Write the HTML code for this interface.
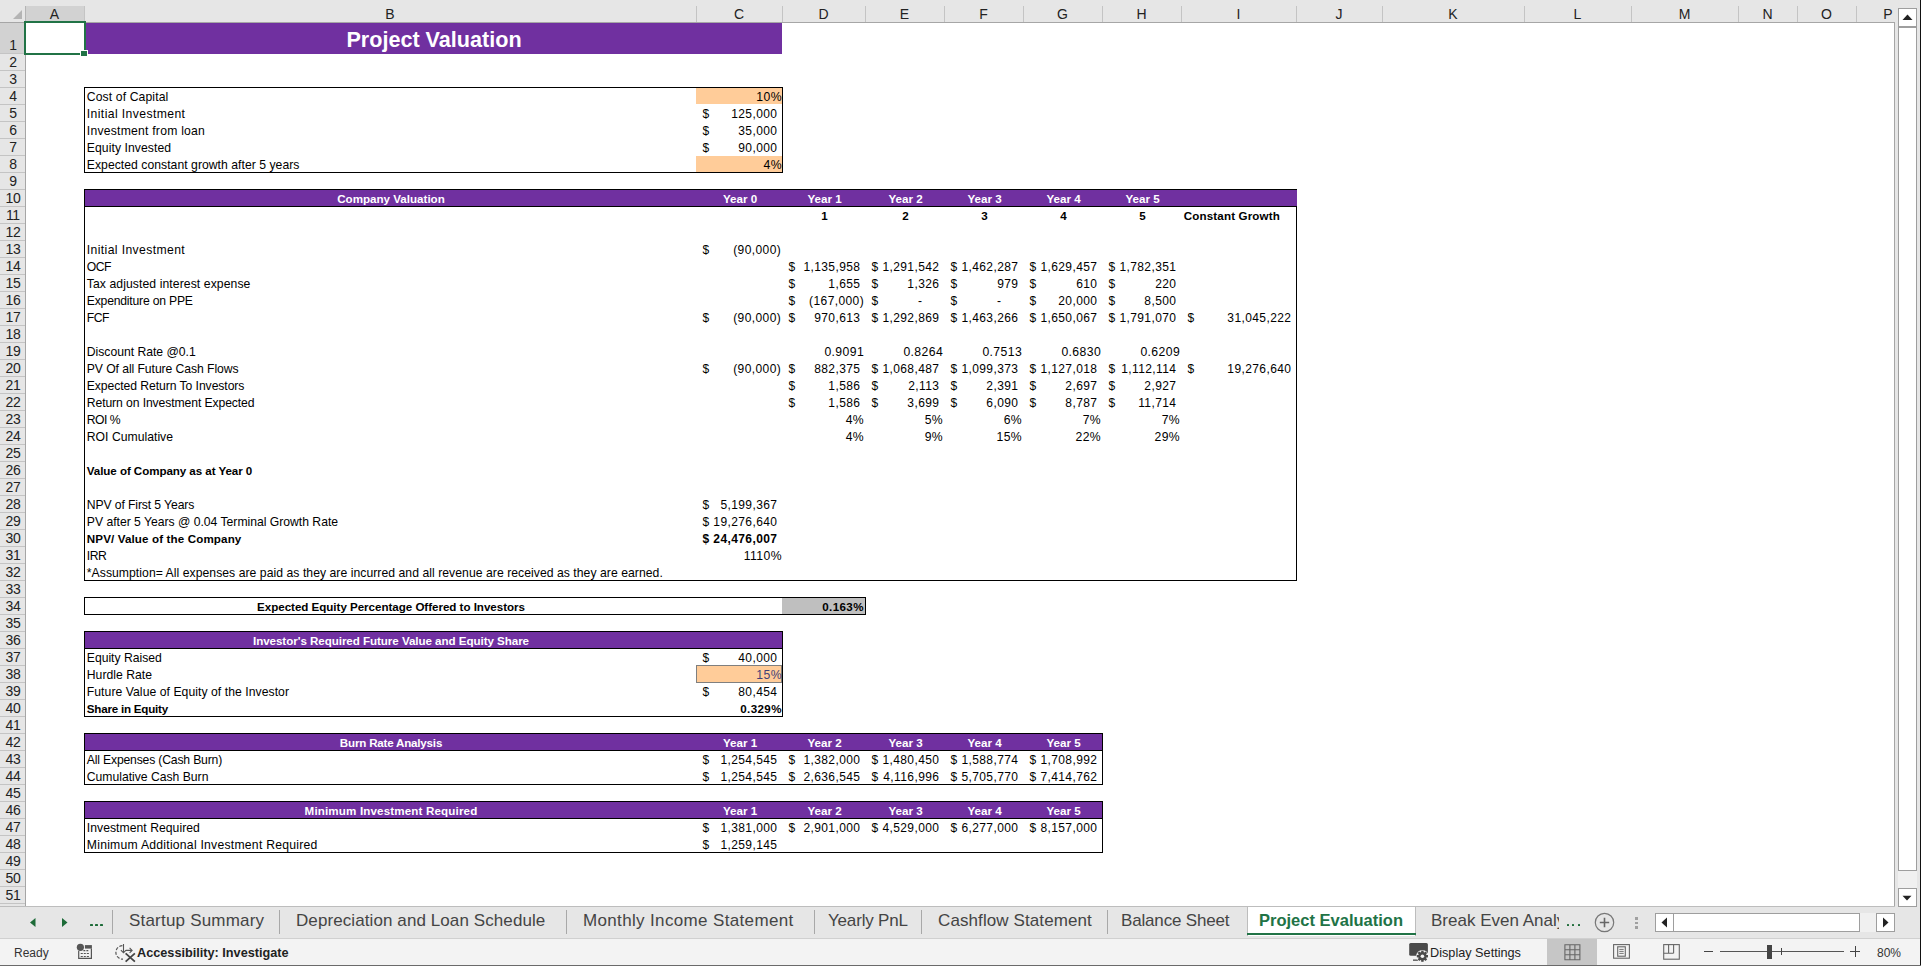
<!DOCTYPE html><html><head><meta charset="utf-8"><style>
html,body{margin:0;padding:0;width:1921px;height:966px;overflow:hidden;background:#fff;font-family:"Liberation Sans",sans-serif;}
.t{position:absolute;height:20px;line-height:20px;white-space:nowrap;overflow:visible;}
.hd{position:absolute;font-size:14px;color:#222;text-align:center;}
</style></head><body>

<div style="position:absolute;left:84px;top:23px;width:698px;height:31px;background:#7030a0"></div>
<div class="t" style="left:85px;width:698px;top:28px;height:24px;line-height:24px;text-align:center;font-size:21.6px;font-weight:700;color:#fff">Project Valuation</div>
<div style="position:absolute;left:696px;top:88px;width:86px;height:16px;background:#ffcc99"></div>
<div style="position:absolute;left:696px;top:156px;width:86px;height:16px;background:#ffcc99"></div>
<div style="position:absolute;left:84px;top:87px;width:699px;height:86px;border:1px solid #000;box-sizing:border-box"></div>
<div class="t" style="left:86.80px;width:800.00px;top:86.77px;text-align:left;font-size:12.2px;color:#000;letter-spacing:0.107px;">Cost of Capital</div>
<div class="t" style="left:-18.10px;width:800.00px;top:86.77px;text-align:right;font-size:12.2px;color:#000;letter-spacing:0.4px;">10%</div>
<div class="t" style="left:86.80px;width:800.00px;top:103.77px;text-align:left;font-size:12.2px;color:#000;letter-spacing:0.397px;">Initial Investment</div>
<div class="t" style="left:702.50px;width:20.00px;top:103.84px;text-align:left;font-size:12px;color:#000;">$</div>
<div class="t" style="left:-22.60px;width:800.00px;top:103.84px;text-align:right;font-size:12px;color:#000;letter-spacing:0.4px;">125,000</div>
<div class="t" style="left:86.80px;width:800.00px;top:120.77px;text-align:left;font-size:12.2px;color:#000;letter-spacing:0.224px;">Investment from loan</div>
<div class="t" style="left:702.50px;width:20.00px;top:120.84px;text-align:left;font-size:12px;color:#000;">$</div>
<div class="t" style="left:-22.60px;width:800.00px;top:120.84px;text-align:right;font-size:12px;color:#000;letter-spacing:0.4px;">35,000</div>
<div class="t" style="left:86.80px;width:800.00px;top:137.77px;text-align:left;font-size:12.2px;color:#000;letter-spacing:0.071px;">Equity Invested</div>
<div class="t" style="left:702.50px;width:20.00px;top:137.84px;text-align:left;font-size:12px;color:#000;">$</div>
<div class="t" style="left:-22.60px;width:800.00px;top:137.84px;text-align:right;font-size:12px;color:#000;letter-spacing:0.4px;">90,000</div>
<div class="t" style="left:86.80px;width:800.00px;top:154.77px;text-align:left;font-size:12.2px;color:#000;letter-spacing:0.034px;">Expected constant growth after 5 years</div>
<div class="t" style="left:-18.10px;width:800.00px;top:154.77px;text-align:right;font-size:12.2px;color:#000;letter-spacing:0.4px;">4%</div>
<div style="position:absolute;left:84px;top:190px;width:1212px;height:16px;background:#7030a0"></div>
<div style="position:absolute;left:84px;top:189px;width:1213px;height:392px;border:1px solid #000;box-sizing:border-box"></div>
<div style="position:absolute;left:84px;top:206px;width:1213px;height:1px;background:#000"></div>
<div style="position:absolute;left:1296px;top:190px;width:1px;height:16px;background:#7030a0"></div>
<div class="t" style="left:85.00px;width:612.00px;top:188.98px;text-align:center;font-size:11.6px;font-weight:700;color:#fff;">Company Valuation</div>
<div class="t" style="left:697.00px;width:86.00px;top:188.98px;text-align:center;font-size:11.6px;font-weight:700;color:#fff;">Year 0</div>
<div class="t" style="left:783.00px;width:83.00px;top:188.98px;text-align:center;font-size:11.6px;font-weight:700;color:#fff;">Year 1</div>
<div class="t" style="left:866.00px;width:79.00px;top:188.98px;text-align:center;font-size:11.6px;font-weight:700;color:#fff;">Year 2</div>
<div class="t" style="left:945.00px;width:79.00px;top:188.98px;text-align:center;font-size:11.6px;font-weight:700;color:#fff;">Year 3</div>
<div class="t" style="left:1024.00px;width:79.00px;top:188.98px;text-align:center;font-size:11.6px;font-weight:700;color:#fff;">Year 4</div>
<div class="t" style="left:1103.00px;width:79.00px;top:188.98px;text-align:center;font-size:11.6px;font-weight:700;color:#fff;">Year 5</div>
<div class="t" style="left:783.00px;width:83.00px;top:205.98px;text-align:center;font-size:11.6px;font-weight:700;color:#000;">1</div>
<div class="t" style="left:866.00px;width:79.00px;top:205.98px;text-align:center;font-size:11.6px;font-weight:700;color:#000;">2</div>
<div class="t" style="left:945.00px;width:79.00px;top:205.98px;text-align:center;font-size:11.6px;font-weight:700;color:#000;">3</div>
<div class="t" style="left:1024.00px;width:79.00px;top:205.98px;text-align:center;font-size:11.6px;font-weight:700;color:#000;">4</div>
<div class="t" style="left:1103.00px;width:79.00px;top:205.98px;text-align:center;font-size:11.6px;font-weight:700;color:#000;">5</div>
<div class="t" style="left:1183.80px;width:800.00px;top:205.98px;text-align:left;font-size:11.6px;font-weight:700;color:#000;letter-spacing:0.14px;">Constant Growth</div>
<div class="t" style="left:86.80px;width:800.00px;top:239.77px;text-align:left;font-size:12.2px;color:#000;letter-spacing:0.382px;">Initial Investment</div>
<div class="t" style="left:702.50px;width:20.00px;top:239.84px;text-align:left;font-size:12px;color:#000;">$</div>
<div class="t" style="left:-18.90px;width:800.00px;top:239.84px;text-align:right;font-size:12px;color:#000;letter-spacing:0.4px;">(90,000)</div>
<div class="t" style="left:86.80px;width:800.00px;top:256.77px;text-align:left;font-size:12.2px;color:#000;letter-spacing:-0.500px;">OCF</div>
<div class="t" style="left:788.50px;width:20.00px;top:256.84px;text-align:left;font-size:12px;color:#000;">$</div>
<div class="t" style="left:60.40px;width:800.00px;top:256.84px;text-align:right;font-size:12px;color:#000;letter-spacing:0.4px;">1,135,958</div>
<div class="t" style="left:871.50px;width:20.00px;top:256.84px;text-align:left;font-size:12px;color:#000;">$</div>
<div class="t" style="left:139.40px;width:800.00px;top:256.84px;text-align:right;font-size:12px;color:#000;letter-spacing:0.4px;">1,291,542</div>
<div class="t" style="left:950.50px;width:20.00px;top:256.84px;text-align:left;font-size:12px;color:#000;">$</div>
<div class="t" style="left:218.40px;width:800.00px;top:256.84px;text-align:right;font-size:12px;color:#000;letter-spacing:0.4px;">1,462,287</div>
<div class="t" style="left:1029.50px;width:20.00px;top:256.84px;text-align:left;font-size:12px;color:#000;">$</div>
<div class="t" style="left:297.40px;width:800.00px;top:256.84px;text-align:right;font-size:12px;color:#000;letter-spacing:0.4px;">1,629,457</div>
<div class="t" style="left:1108.50px;width:20.00px;top:256.84px;text-align:left;font-size:12px;color:#000;">$</div>
<div class="t" style="left:376.40px;width:800.00px;top:256.84px;text-align:right;font-size:12px;color:#000;letter-spacing:0.4px;">1,782,351</div>
<div class="t" style="left:86.80px;width:800.00px;top:273.77px;text-align:left;font-size:12.2px;color:#000;letter-spacing:0.082px;">Tax adjusted interest expense</div>
<div class="t" style="left:788.50px;width:20.00px;top:273.84px;text-align:left;font-size:12px;color:#000;">$</div>
<div class="t" style="left:60.40px;width:800.00px;top:273.84px;text-align:right;font-size:12px;color:#000;letter-spacing:0.4px;">1,655</div>
<div class="t" style="left:871.50px;width:20.00px;top:273.84px;text-align:left;font-size:12px;color:#000;">$</div>
<div class="t" style="left:139.40px;width:800.00px;top:273.84px;text-align:right;font-size:12px;color:#000;letter-spacing:0.4px;">1,326</div>
<div class="t" style="left:950.50px;width:20.00px;top:273.84px;text-align:left;font-size:12px;color:#000;">$</div>
<div class="t" style="left:218.40px;width:800.00px;top:273.84px;text-align:right;font-size:12px;color:#000;letter-spacing:0.4px;">979</div>
<div class="t" style="left:1029.50px;width:20.00px;top:273.84px;text-align:left;font-size:12px;color:#000;">$</div>
<div class="t" style="left:297.40px;width:800.00px;top:273.84px;text-align:right;font-size:12px;color:#000;letter-spacing:0.4px;">610</div>
<div class="t" style="left:1108.50px;width:20.00px;top:273.84px;text-align:left;font-size:12px;color:#000;">$</div>
<div class="t" style="left:376.40px;width:800.00px;top:273.84px;text-align:right;font-size:12px;color:#000;letter-spacing:0.4px;">220</div>
<div class="t" style="left:86.80px;width:800.00px;top:290.77px;text-align:left;font-size:12.2px;color:#000;letter-spacing:-0.212px;">Expenditure on PPE</div>
<div class="t" style="left:788.50px;width:20.00px;top:290.84px;text-align:left;font-size:12px;color:#000;">$</div>
<div class="t" style="left:64.10px;width:800.00px;top:290.84px;text-align:right;font-size:12px;color:#000;letter-spacing:0.4px;">(167,000)</div>
<div class="t" style="left:871.50px;width:20.00px;top:290.84px;text-align:left;font-size:12px;color:#000;">$</div>
<div class="t" style="left:122.00px;width:800.00px;top:290.84px;text-align:right;font-size:12px;color:#000;">-</div>
<div class="t" style="left:950.50px;width:20.00px;top:290.84px;text-align:left;font-size:12px;color:#000;">$</div>
<div class="t" style="left:201.00px;width:800.00px;top:290.84px;text-align:right;font-size:12px;color:#000;">-</div>
<div class="t" style="left:1029.50px;width:20.00px;top:290.84px;text-align:left;font-size:12px;color:#000;">$</div>
<div class="t" style="left:297.40px;width:800.00px;top:290.84px;text-align:right;font-size:12px;color:#000;letter-spacing:0.4px;">20,000</div>
<div class="t" style="left:1108.50px;width:20.00px;top:290.84px;text-align:left;font-size:12px;color:#000;">$</div>
<div class="t" style="left:376.40px;width:800.00px;top:290.84px;text-align:right;font-size:12px;color:#000;letter-spacing:0.4px;">8,500</div>
<div class="t" style="left:86.80px;width:800.00px;top:307.77px;text-align:left;font-size:12.2px;color:#000;letter-spacing:-0.500px;">FCF</div>
<div class="t" style="left:702.50px;width:20.00px;top:307.84px;text-align:left;font-size:12px;color:#000;">$</div>
<div class="t" style="left:-18.90px;width:800.00px;top:307.84px;text-align:right;font-size:12px;color:#000;letter-spacing:0.4px;">(90,000)</div>
<div class="t" style="left:788.50px;width:20.00px;top:307.84px;text-align:left;font-size:12px;color:#000;">$</div>
<div class="t" style="left:60.40px;width:800.00px;top:307.84px;text-align:right;font-size:12px;color:#000;letter-spacing:0.4px;">970,613</div>
<div class="t" style="left:871.50px;width:20.00px;top:307.84px;text-align:left;font-size:12px;color:#000;">$</div>
<div class="t" style="left:139.40px;width:800.00px;top:307.84px;text-align:right;font-size:12px;color:#000;letter-spacing:0.4px;">1,292,869</div>
<div class="t" style="left:950.50px;width:20.00px;top:307.84px;text-align:left;font-size:12px;color:#000;">$</div>
<div class="t" style="left:218.40px;width:800.00px;top:307.84px;text-align:right;font-size:12px;color:#000;letter-spacing:0.4px;">1,463,266</div>
<div class="t" style="left:1029.50px;width:20.00px;top:307.84px;text-align:left;font-size:12px;color:#000;">$</div>
<div class="t" style="left:297.40px;width:800.00px;top:307.84px;text-align:right;font-size:12px;color:#000;letter-spacing:0.4px;">1,650,067</div>
<div class="t" style="left:1108.50px;width:20.00px;top:307.84px;text-align:left;font-size:12px;color:#000;">$</div>
<div class="t" style="left:376.40px;width:800.00px;top:307.84px;text-align:right;font-size:12px;color:#000;letter-spacing:0.4px;">1,791,070</div>
<div class="t" style="left:1187.50px;width:20.00px;top:307.84px;text-align:left;font-size:12px;color:#000;">$</div>
<div class="t" style="left:491.40px;width:800.00px;top:307.84px;text-align:right;font-size:12px;color:#000;letter-spacing:0.4px;">31,045,222</div>
<div class="t" style="left:86.80px;width:800.00px;top:341.77px;text-align:left;font-size:12.2px;color:#000;letter-spacing:-0.018px;">Discount Rate @0.1</div>
<div class="t" style="left:64.10px;width:800.00px;top:341.77px;text-align:right;font-size:12.2px;color:#000;letter-spacing:0.4px;">0.9091</div>
<div class="t" style="left:143.10px;width:800.00px;top:341.77px;text-align:right;font-size:12.2px;color:#000;letter-spacing:0.4px;">0.8264</div>
<div class="t" style="left:222.10px;width:800.00px;top:341.77px;text-align:right;font-size:12.2px;color:#000;letter-spacing:0.4px;">0.7513</div>
<div class="t" style="left:301.10px;width:800.00px;top:341.77px;text-align:right;font-size:12.2px;color:#000;letter-spacing:0.4px;">0.6830</div>
<div class="t" style="left:380.10px;width:800.00px;top:341.77px;text-align:right;font-size:12.2px;color:#000;letter-spacing:0.4px;">0.6209</div>
<div class="t" style="left:86.80px;width:800.00px;top:358.77px;text-align:left;font-size:12.2px;color:#000;letter-spacing:-0.077px;">PV Of all Future Cash Flows</div>
<div class="t" style="left:702.50px;width:20.00px;top:358.84px;text-align:left;font-size:12px;color:#000;">$</div>
<div class="t" style="left:-18.90px;width:800.00px;top:358.84px;text-align:right;font-size:12px;color:#000;letter-spacing:0.4px;">(90,000)</div>
<div class="t" style="left:788.50px;width:20.00px;top:358.84px;text-align:left;font-size:12px;color:#000;">$</div>
<div class="t" style="left:60.40px;width:800.00px;top:358.84px;text-align:right;font-size:12px;color:#000;letter-spacing:0.4px;">882,375</div>
<div class="t" style="left:871.50px;width:20.00px;top:358.84px;text-align:left;font-size:12px;color:#000;">$</div>
<div class="t" style="left:139.40px;width:800.00px;top:358.84px;text-align:right;font-size:12px;color:#000;letter-spacing:0.4px;">1,068,487</div>
<div class="t" style="left:950.50px;width:20.00px;top:358.84px;text-align:left;font-size:12px;color:#000;">$</div>
<div class="t" style="left:218.40px;width:800.00px;top:358.84px;text-align:right;font-size:12px;color:#000;letter-spacing:0.4px;">1,099,373</div>
<div class="t" style="left:1029.50px;width:20.00px;top:358.84px;text-align:left;font-size:12px;color:#000;">$</div>
<div class="t" style="left:297.40px;width:800.00px;top:358.84px;text-align:right;font-size:12px;color:#000;letter-spacing:0.4px;">1,127,018</div>
<div class="t" style="left:1108.50px;width:20.00px;top:358.84px;text-align:left;font-size:12px;color:#000;">$</div>
<div class="t" style="left:376.40px;width:800.00px;top:358.84px;text-align:right;font-size:12px;color:#000;letter-spacing:0.4px;">1,112,114</div>
<div class="t" style="left:1187.50px;width:20.00px;top:358.84px;text-align:left;font-size:12px;color:#000;">$</div>
<div class="t" style="left:491.40px;width:800.00px;top:358.84px;text-align:right;font-size:12px;color:#000;letter-spacing:0.4px;">19,276,640</div>
<div class="t" style="left:86.80px;width:800.00px;top:375.77px;text-align:left;font-size:12.2px;color:#000;letter-spacing:-0.074px;">Expected Return To Investors</div>
<div class="t" style="left:788.50px;width:20.00px;top:375.84px;text-align:left;font-size:12px;color:#000;">$</div>
<div class="t" style="left:60.40px;width:800.00px;top:375.84px;text-align:right;font-size:12px;color:#000;letter-spacing:0.4px;">1,586</div>
<div class="t" style="left:871.50px;width:20.00px;top:375.84px;text-align:left;font-size:12px;color:#000;">$</div>
<div class="t" style="left:139.40px;width:800.00px;top:375.84px;text-align:right;font-size:12px;color:#000;letter-spacing:0.4px;">2,113</div>
<div class="t" style="left:950.50px;width:20.00px;top:375.84px;text-align:left;font-size:12px;color:#000;">$</div>
<div class="t" style="left:218.40px;width:800.00px;top:375.84px;text-align:right;font-size:12px;color:#000;letter-spacing:0.4px;">2,391</div>
<div class="t" style="left:1029.50px;width:20.00px;top:375.84px;text-align:left;font-size:12px;color:#000;">$</div>
<div class="t" style="left:297.40px;width:800.00px;top:375.84px;text-align:right;font-size:12px;color:#000;letter-spacing:0.4px;">2,697</div>
<div class="t" style="left:1108.50px;width:20.00px;top:375.84px;text-align:left;font-size:12px;color:#000;">$</div>
<div class="t" style="left:376.40px;width:800.00px;top:375.84px;text-align:right;font-size:12px;color:#000;letter-spacing:0.4px;">2,927</div>
<div class="t" style="left:86.80px;width:800.00px;top:392.77px;text-align:left;font-size:12.2px;color:#000;letter-spacing:-0.107px;">Return on Investment Expected</div>
<div class="t" style="left:788.50px;width:20.00px;top:392.84px;text-align:left;font-size:12px;color:#000;">$</div>
<div class="t" style="left:60.40px;width:800.00px;top:392.84px;text-align:right;font-size:12px;color:#000;letter-spacing:0.4px;">1,586</div>
<div class="t" style="left:871.50px;width:20.00px;top:392.84px;text-align:left;font-size:12px;color:#000;">$</div>
<div class="t" style="left:139.40px;width:800.00px;top:392.84px;text-align:right;font-size:12px;color:#000;letter-spacing:0.4px;">3,699</div>
<div class="t" style="left:950.50px;width:20.00px;top:392.84px;text-align:left;font-size:12px;color:#000;">$</div>
<div class="t" style="left:218.40px;width:800.00px;top:392.84px;text-align:right;font-size:12px;color:#000;letter-spacing:0.4px;">6,090</div>
<div class="t" style="left:1029.50px;width:20.00px;top:392.84px;text-align:left;font-size:12px;color:#000;">$</div>
<div class="t" style="left:297.40px;width:800.00px;top:392.84px;text-align:right;font-size:12px;color:#000;letter-spacing:0.4px;">8,787</div>
<div class="t" style="left:1108.50px;width:20.00px;top:392.84px;text-align:left;font-size:12px;color:#000;">$</div>
<div class="t" style="left:376.40px;width:800.00px;top:392.84px;text-align:right;font-size:12px;color:#000;letter-spacing:0.4px;">11,714</div>
<div class="t" style="left:86.80px;width:800.00px;top:409.77px;text-align:left;font-size:12.2px;color:#000;letter-spacing:-0.500px;">ROI %</div>
<div class="t" style="left:64.10px;width:800.00px;top:409.77px;text-align:right;font-size:12.2px;color:#000;letter-spacing:0.4px;">4%</div>
<div class="t" style="left:143.10px;width:800.00px;top:409.77px;text-align:right;font-size:12.2px;color:#000;letter-spacing:0.4px;">5%</div>
<div class="t" style="left:222.10px;width:800.00px;top:409.77px;text-align:right;font-size:12.2px;color:#000;letter-spacing:0.4px;">6%</div>
<div class="t" style="left:301.10px;width:800.00px;top:409.77px;text-align:right;font-size:12.2px;color:#000;letter-spacing:0.4px;">7%</div>
<div class="t" style="left:380.10px;width:800.00px;top:409.77px;text-align:right;font-size:12.2px;color:#000;letter-spacing:0.4px;">7%</div>
<div class="t" style="left:86.80px;width:800.00px;top:426.77px;text-align:left;font-size:12.2px;color:#000;letter-spacing:0.015px;">ROI Cumulative</div>
<div class="t" style="left:64.10px;width:800.00px;top:426.77px;text-align:right;font-size:12.2px;color:#000;letter-spacing:0.4px;">4%</div>
<div class="t" style="left:143.10px;width:800.00px;top:426.77px;text-align:right;font-size:12.2px;color:#000;letter-spacing:0.4px;">9%</div>
<div class="t" style="left:222.10px;width:800.00px;top:426.77px;text-align:right;font-size:12.2px;color:#000;letter-spacing:0.4px;">15%</div>
<div class="t" style="left:301.10px;width:800.00px;top:426.77px;text-align:right;font-size:12.2px;color:#000;letter-spacing:0.4px;">22%</div>
<div class="t" style="left:380.10px;width:800.00px;top:426.77px;text-align:right;font-size:12.2px;color:#000;letter-spacing:0.4px;">29%</div>
<div class="t" style="left:86.80px;width:800.00px;top:460.98px;text-align:left;font-size:11.6px;font-weight:700;color:#000;letter-spacing:-0.068px;">Value of Company as at Year 0</div>
<div class="t" style="left:86.80px;width:800.00px;top:494.77px;text-align:left;font-size:12.2px;color:#000;letter-spacing:-0.116px;">NPV of First 5 Years</div>
<div class="t" style="left:702.50px;width:20.00px;top:494.84px;text-align:left;font-size:12px;color:#000;">$</div>
<div class="t" style="left:-22.60px;width:800.00px;top:494.84px;text-align:right;font-size:12px;color:#000;letter-spacing:0.4px;">5,199,367</div>
<div class="t" style="left:86.80px;width:800.00px;top:511.77px;text-align:left;font-size:12.2px;color:#000;letter-spacing:-0.016px;">PV after 5 Years @ 0.04 Terminal Growth Rate</div>
<div class="t" style="left:702.50px;width:20.00px;top:511.84px;text-align:left;font-size:12px;color:#000;">$</div>
<div class="t" style="left:-22.60px;width:800.00px;top:511.84px;text-align:right;font-size:12px;color:#000;letter-spacing:0.4px;">19,276,640</div>
<div class="t" style="left:86.80px;width:800.00px;top:528.98px;text-align:left;font-size:11.6px;font-weight:700;color:#000;letter-spacing:0.129px;">NPV/ Value of the Company</div>
<div class="t" style="left:702.50px;width:20.00px;top:528.84px;text-align:left;font-size:12px;font-weight:700;color:#000;">$</div>
<div class="t" style="left:-22.60px;width:800.00px;top:528.84px;text-align:right;font-size:12px;font-weight:700;color:#000;letter-spacing:0.4px;">24,476,007</div>
<div class="t" style="left:86.80px;width:800.00px;top:545.77px;text-align:left;font-size:12.2px;color:#000;letter-spacing:-0.500px;">IRR</div>
<div class="t" style="left:-18.10px;width:800.00px;top:545.77px;text-align:right;font-size:12.2px;color:#000;letter-spacing:0.4px;">1110%</div>
<div class="t" style="left:86.80px;width:800.00px;top:562.77px;text-align:left;font-size:12.2px;color:#000;letter-spacing:0.044px;">*Assumption= All expenses are paid as they are incurred and all revenue are received as they are earned.</div>
<div style="position:absolute;left:782px;top:598px;width:83px;height:16px;background:#bfbfbf"></div>
<div style="position:absolute;left:84px;top:597px;width:782px;height:18px;border:1px solid #000;box-sizing:border-box"></div>
<div class="t" style="left:85.00px;width:612.00px;top:596.98px;text-align:center;font-size:11.6px;font-weight:700;color:#000;letter-spacing:-0.03px;">Expected Equity Percentage Offered to Investors</div>
<div class="t" style="left:63.90px;width:800.00px;top:596.98px;text-align:right;font-size:11.6px;font-weight:700;color:#000;letter-spacing:0.4px;">0.163%</div>
<div style="position:absolute;left:84px;top:632px;width:698px;height:16px;background:#7030a0"></div>
<div style="position:absolute;left:696px;top:666px;width:86px;height:16px;background:#ffcc99"></div>
<div style="position:absolute;left:696px;top:665px;width:86px;height:18px;border:1px solid #7f7f7f;box-sizing:border-box"></div>
<div style="position:absolute;left:84px;top:631px;width:699px;height:86px;border:1px solid #000;box-sizing:border-box"></div>
<div style="position:absolute;left:84px;top:648px;width:699px;height:1px;background:#000"></div>
<div class="t" style="left:85.00px;width:612.00px;top:630.98px;text-align:center;font-size:11.6px;font-weight:700;color:#fff;letter-spacing:-0.05px;">Investor's Required Future Value and Equity Share</div>
<div class="t" style="left:86.80px;width:800.00px;top:647.77px;text-align:left;font-size:12.2px;color:#000;letter-spacing:-0.017px;">Equity Raised</div>
<div class="t" style="left:702.50px;width:20.00px;top:647.84px;text-align:left;font-size:12px;color:#000;">$</div>
<div class="t" style="left:-22.60px;width:800.00px;top:647.84px;text-align:right;font-size:12px;color:#000;letter-spacing:0.4px;">40,000</div>
<div class="t" style="left:86.80px;width:800.00px;top:664.77px;text-align:left;font-size:12.2px;color:#000;letter-spacing:0.020px;">Hurdle Rate</div>
<div class="t" style="left:-18.10px;width:800.00px;top:664.77px;text-align:right;font-size:12.2px;color:#3f3f76;letter-spacing:0.4px;">15%</div>
<div class="t" style="left:86.80px;width:800.00px;top:681.77px;text-align:left;font-size:12.2px;color:#000;letter-spacing:0.051px;">Future Value of Equity of the Investor</div>
<div class="t" style="left:702.50px;width:20.00px;top:681.84px;text-align:left;font-size:12px;color:#000;">$</div>
<div class="t" style="left:-22.60px;width:800.00px;top:681.84px;text-align:right;font-size:12px;color:#000;letter-spacing:0.4px;">80,454</div>
<div class="t" style="left:86.80px;width:800.00px;top:698.98px;text-align:left;font-size:11.6px;font-weight:700;color:#000;letter-spacing:-0.214px;">Share in Equity</div>
<div class="t" style="left:-18.10px;width:800.00px;top:698.98px;text-align:right;font-size:11.6px;font-weight:700;color:#000;letter-spacing:0.4px;">0.329%</div>
<div style="position:absolute;left:84px;top:734px;width:1018px;height:16px;background:#7030a0"></div>
<div style="position:absolute;left:84px;top:733px;width:1019px;height:52px;border:1px solid #000;box-sizing:border-box"></div>
<div style="position:absolute;left:84px;top:750px;width:1019px;height:1px;background:#000"></div>
<div class="t" style="left:85.00px;width:612.00px;top:732.98px;text-align:center;font-size:11.6px;font-weight:700;color:#fff;letter-spacing:-0.2px;">Burn Rate Analysis</div>
<div class="t" style="left:697.00px;width:86.00px;top:732.98px;text-align:center;font-size:11.6px;font-weight:700;color:#fff;">Year 1</div>
<div class="t" style="left:783.00px;width:83.00px;top:732.98px;text-align:center;font-size:11.6px;font-weight:700;color:#fff;">Year 2</div>
<div class="t" style="left:866.00px;width:79.00px;top:732.98px;text-align:center;font-size:11.6px;font-weight:700;color:#fff;">Year 3</div>
<div class="t" style="left:945.00px;width:79.00px;top:732.98px;text-align:center;font-size:11.6px;font-weight:700;color:#fff;">Year 4</div>
<div class="t" style="left:1024.00px;width:79.00px;top:732.98px;text-align:center;font-size:11.6px;font-weight:700;color:#fff;">Year 5</div>
<div class="t" style="left:86.80px;width:800.00px;top:749.77px;text-align:left;font-size:12.2px;color:#000;letter-spacing:-0.178px;">All Expenses (Cash Burn)</div>
<div class="t" style="left:702.50px;width:20.00px;top:749.84px;text-align:left;font-size:12px;color:#000;">$</div>
<div class="t" style="left:-22.60px;width:800.00px;top:749.84px;text-align:right;font-size:12px;color:#000;letter-spacing:0.4px;">1,254,545</div>
<div class="t" style="left:788.50px;width:20.00px;top:749.84px;text-align:left;font-size:12px;color:#000;">$</div>
<div class="t" style="left:60.40px;width:800.00px;top:749.84px;text-align:right;font-size:12px;color:#000;letter-spacing:0.4px;">1,382,000</div>
<div class="t" style="left:871.50px;width:20.00px;top:749.84px;text-align:left;font-size:12px;color:#000;">$</div>
<div class="t" style="left:139.40px;width:800.00px;top:749.84px;text-align:right;font-size:12px;color:#000;letter-spacing:0.4px;">1,480,450</div>
<div class="t" style="left:950.50px;width:20.00px;top:749.84px;text-align:left;font-size:12px;color:#000;">$</div>
<div class="t" style="left:218.40px;width:800.00px;top:749.84px;text-align:right;font-size:12px;color:#000;letter-spacing:0.4px;">1,588,774</div>
<div class="t" style="left:1029.50px;width:20.00px;top:749.84px;text-align:left;font-size:12px;color:#000;">$</div>
<div class="t" style="left:297.40px;width:800.00px;top:749.84px;text-align:right;font-size:12px;color:#000;letter-spacing:0.4px;">1,708,992</div>
<div class="t" style="left:86.80px;width:800.00px;top:766.77px;text-align:left;font-size:12.2px;color:#000;letter-spacing:-0.016px;">Cumulative Cash Burn</div>
<div class="t" style="left:702.50px;width:20.00px;top:766.84px;text-align:left;font-size:12px;color:#000;">$</div>
<div class="t" style="left:-22.60px;width:800.00px;top:766.84px;text-align:right;font-size:12px;color:#000;letter-spacing:0.4px;">1,254,545</div>
<div class="t" style="left:788.50px;width:20.00px;top:766.84px;text-align:left;font-size:12px;color:#000;">$</div>
<div class="t" style="left:60.40px;width:800.00px;top:766.84px;text-align:right;font-size:12px;color:#000;letter-spacing:0.4px;">2,636,545</div>
<div class="t" style="left:871.50px;width:20.00px;top:766.84px;text-align:left;font-size:12px;color:#000;">$</div>
<div class="t" style="left:139.40px;width:800.00px;top:766.84px;text-align:right;font-size:12px;color:#000;letter-spacing:0.4px;">4,116,996</div>
<div class="t" style="left:950.50px;width:20.00px;top:766.84px;text-align:left;font-size:12px;color:#000;">$</div>
<div class="t" style="left:218.40px;width:800.00px;top:766.84px;text-align:right;font-size:12px;color:#000;letter-spacing:0.4px;">5,705,770</div>
<div class="t" style="left:1029.50px;width:20.00px;top:766.84px;text-align:left;font-size:12px;color:#000;">$</div>
<div class="t" style="left:297.40px;width:800.00px;top:766.84px;text-align:right;font-size:12px;color:#000;letter-spacing:0.4px;">7,414,762</div>
<div style="position:absolute;left:84px;top:802px;width:1018px;height:16px;background:#7030a0"></div>
<div style="position:absolute;left:84px;top:801px;width:1019px;height:52px;border:1px solid #000;box-sizing:border-box"></div>
<div style="position:absolute;left:84px;top:818px;width:1019px;height:1px;background:#000"></div>
<div class="t" style="left:85.00px;width:612.00px;top:800.98px;text-align:center;font-size:11.6px;font-weight:700;color:#fff;letter-spacing:0.15px;">Minimum Investment Required</div>
<div class="t" style="left:697.00px;width:86.00px;top:800.98px;text-align:center;font-size:11.6px;font-weight:700;color:#fff;">Year 1</div>
<div class="t" style="left:783.00px;width:83.00px;top:800.98px;text-align:center;font-size:11.6px;font-weight:700;color:#fff;">Year 2</div>
<div class="t" style="left:866.00px;width:79.00px;top:800.98px;text-align:center;font-size:11.6px;font-weight:700;color:#fff;">Year 3</div>
<div class="t" style="left:945.00px;width:79.00px;top:800.98px;text-align:center;font-size:11.6px;font-weight:700;color:#fff;">Year 4</div>
<div class="t" style="left:1024.00px;width:79.00px;top:800.98px;text-align:center;font-size:11.6px;font-weight:700;color:#fff;">Year 5</div>
<div class="t" style="left:86.80px;width:800.00px;top:817.77px;text-align:left;font-size:12.2px;color:#000;letter-spacing:0.033px;">Investment Required</div>
<div class="t" style="left:702.50px;width:20.00px;top:817.84px;text-align:left;font-size:12px;color:#000;">$</div>
<div class="t" style="left:-22.60px;width:800.00px;top:817.84px;text-align:right;font-size:12px;color:#000;letter-spacing:0.4px;">1,381,000</div>
<div class="t" style="left:788.50px;width:20.00px;top:817.84px;text-align:left;font-size:12px;color:#000;">$</div>
<div class="t" style="left:60.40px;width:800.00px;top:817.84px;text-align:right;font-size:12px;color:#000;letter-spacing:0.4px;">2,901,000</div>
<div class="t" style="left:871.50px;width:20.00px;top:817.84px;text-align:left;font-size:12px;color:#000;">$</div>
<div class="t" style="left:139.40px;width:800.00px;top:817.84px;text-align:right;font-size:12px;color:#000;letter-spacing:0.4px;">4,529,000</div>
<div class="t" style="left:950.50px;width:20.00px;top:817.84px;text-align:left;font-size:12px;color:#000;">$</div>
<div class="t" style="left:218.40px;width:800.00px;top:817.84px;text-align:right;font-size:12px;color:#000;letter-spacing:0.4px;">6,277,000</div>
<div class="t" style="left:1029.50px;width:20.00px;top:817.84px;text-align:left;font-size:12px;color:#000;">$</div>
<div class="t" style="left:297.40px;width:800.00px;top:817.84px;text-align:right;font-size:12px;color:#000;letter-spacing:0.4px;">8,157,000</div>
<div class="t" style="left:86.80px;width:800.00px;top:834.77px;text-align:left;font-size:12.2px;color:#000;letter-spacing:0.243px;">Minimum Additional Investment Required</div>
<div class="t" style="left:702.50px;width:20.00px;top:834.84px;text-align:left;font-size:12px;color:#000;">$</div>
<div class="t" style="left:-22.60px;width:800.00px;top:834.84px;text-align:right;font-size:12px;color:#000;letter-spacing:0.4px;">1,259,145</div>
<div style="position:absolute;left:0px;top:0px;width:1921px;height:22px;background:#e6e6e6"></div>
<div style="position:absolute;left:26px;top:6px;width:58px;height:16px;background:#d2d2d2"></div>
<div style="position:absolute;left:25px;top:6px;width:1px;height:16px;background:#b4b4b4"></div>
<div style="position:absolute;left:0px;top:22px;width:1895px;height:1px;background:#a6a6a6"></div>
<div style="position:absolute;left:84px;top:6px;width:1px;height:16px;background:#c4c4c4"></div>
<div style="position:absolute;left:696px;top:6px;width:1px;height:16px;background:#c4c4c4"></div>
<div style="position:absolute;left:782px;top:6px;width:1px;height:16px;background:#c4c4c4"></div>
<div style="position:absolute;left:865px;top:6px;width:1px;height:16px;background:#c4c4c4"></div>
<div style="position:absolute;left:944px;top:6px;width:1px;height:16px;background:#c4c4c4"></div>
<div style="position:absolute;left:1023px;top:6px;width:1px;height:16px;background:#c4c4c4"></div>
<div style="position:absolute;left:1102px;top:6px;width:1px;height:16px;background:#c4c4c4"></div>
<div style="position:absolute;left:1181px;top:6px;width:1px;height:16px;background:#c4c4c4"></div>
<div style="position:absolute;left:1296px;top:6px;width:1px;height:16px;background:#c4c4c4"></div>
<div style="position:absolute;left:1382px;top:6px;width:1px;height:16px;background:#c4c4c4"></div>
<div style="position:absolute;left:1524px;top:6px;width:1px;height:16px;background:#c4c4c4"></div>
<div style="position:absolute;left:1631px;top:6px;width:1px;height:16px;background:#c4c4c4"></div>
<div style="position:absolute;left:1738px;top:6px;width:1px;height:16px;background:#c4c4c4"></div>
<div style="position:absolute;left:1797px;top:6px;width:1px;height:16px;background:#c4c4c4"></div>
<div style="position:absolute;left:1856px;top:6px;width:1px;height:16px;background:#c4c4c4"></div>
<svg style="position:absolute;left:12px;top:9px" width="12" height="12"><polygon points="10,1 10,10 1,10" fill="#b4b4b4"/></svg>
<div class="hd" style="left:25px;width:59px;top:3.5px;height:20px;line-height:20px">A</div>
<div class="hd" style="left:84px;width:612px;top:3.5px;height:20px;line-height:20px">B</div>
<div class="hd" style="left:696px;width:86px;top:3.5px;height:20px;line-height:20px">C</div>
<div class="hd" style="left:782px;width:83px;top:3.5px;height:20px;line-height:20px">D</div>
<div class="hd" style="left:865px;width:79px;top:3.5px;height:20px;line-height:20px">E</div>
<div class="hd" style="left:944px;width:79px;top:3.5px;height:20px;line-height:20px">F</div>
<div class="hd" style="left:1023px;width:79px;top:3.5px;height:20px;line-height:20px">G</div>
<div class="hd" style="left:1102px;width:79px;top:3.5px;height:20px;line-height:20px">H</div>
<div class="hd" style="left:1181px;width:115px;top:3.5px;height:20px;line-height:20px">I</div>
<div class="hd" style="left:1296px;width:86px;top:3.5px;height:20px;line-height:20px">J</div>
<div class="hd" style="left:1382px;width:142px;top:3.5px;height:20px;line-height:20px">K</div>
<div class="hd" style="left:1524px;width:107px;top:3.5px;height:20px;line-height:20px">L</div>
<div class="hd" style="left:1631px;width:107px;top:3.5px;height:20px;line-height:20px">M</div>
<div class="hd" style="left:1738px;width:59px;top:3.5px;height:20px;line-height:20px">N</div>
<div class="hd" style="left:1797px;width:59px;top:3.5px;height:20px;line-height:20px">O</div>
<div class="hd" style="left:1859px;width:58px;top:3.5px;height:20px;line-height:20px">P</div>
<div style="position:absolute;left:0px;top:23px;width:25px;height:883px;background:#e6e6e6"></div>
<div style="position:absolute;left:0px;top:23px;width:25px;height:30px;background:#d2d2d2"></div>
<div style="position:absolute;left:25px;top:22px;width:1px;height:884px;background:#a6a6a6"></div>
<div style="position:absolute;left:0px;top:53px;width:25px;height:1px;background:#c4c4c4"></div>
<div class="hd" style="left:0.4px;width:25px;top:35.2px;height:20px;line-height:20px;font-size:14px;letter-spacing:-0.5px">1</div>
<div style="position:absolute;left:0px;top:70px;width:25px;height:1px;background:#c4c4c4"></div>
<div class="hd" style="left:0.4px;width:25px;top:52.2px;height:20px;line-height:20px;font-size:14px;letter-spacing:-0.5px">2</div>
<div style="position:absolute;left:0px;top:87px;width:25px;height:1px;background:#c4c4c4"></div>
<div class="hd" style="left:0.4px;width:25px;top:69.2px;height:20px;line-height:20px;font-size:14px;letter-spacing:-0.5px">3</div>
<div style="position:absolute;left:0px;top:104px;width:25px;height:1px;background:#c4c4c4"></div>
<div class="hd" style="left:0.4px;width:25px;top:86.2px;height:20px;line-height:20px;font-size:14px;letter-spacing:-0.5px">4</div>
<div style="position:absolute;left:0px;top:121px;width:25px;height:1px;background:#c4c4c4"></div>
<div class="hd" style="left:0.4px;width:25px;top:103.2px;height:20px;line-height:20px;font-size:14px;letter-spacing:-0.5px">5</div>
<div style="position:absolute;left:0px;top:138px;width:25px;height:1px;background:#c4c4c4"></div>
<div class="hd" style="left:0.4px;width:25px;top:120.2px;height:20px;line-height:20px;font-size:14px;letter-spacing:-0.5px">6</div>
<div style="position:absolute;left:0px;top:155px;width:25px;height:1px;background:#c4c4c4"></div>
<div class="hd" style="left:0.4px;width:25px;top:137.2px;height:20px;line-height:20px;font-size:14px;letter-spacing:-0.5px">7</div>
<div style="position:absolute;left:0px;top:172px;width:25px;height:1px;background:#c4c4c4"></div>
<div class="hd" style="left:0.4px;width:25px;top:154.2px;height:20px;line-height:20px;font-size:14px;letter-spacing:-0.5px">8</div>
<div style="position:absolute;left:0px;top:189px;width:25px;height:1px;background:#c4c4c4"></div>
<div class="hd" style="left:0.4px;width:25px;top:171.2px;height:20px;line-height:20px;font-size:14px;letter-spacing:-0.5px">9</div>
<div style="position:absolute;left:0px;top:206px;width:25px;height:1px;background:#c4c4c4"></div>
<div class="hd" style="left:0.4px;width:25px;top:188.2px;height:20px;line-height:20px;font-size:14px;letter-spacing:-0.5px">10</div>
<div style="position:absolute;left:0px;top:223px;width:25px;height:1px;background:#c4c4c4"></div>
<div class="hd" style="left:0.4px;width:25px;top:205.2px;height:20px;line-height:20px;font-size:14px;letter-spacing:-0.5px">11</div>
<div style="position:absolute;left:0px;top:240px;width:25px;height:1px;background:#c4c4c4"></div>
<div class="hd" style="left:0.4px;width:25px;top:222.2px;height:20px;line-height:20px;font-size:14px;letter-spacing:-0.5px">12</div>
<div style="position:absolute;left:0px;top:257px;width:25px;height:1px;background:#c4c4c4"></div>
<div class="hd" style="left:0.4px;width:25px;top:239.2px;height:20px;line-height:20px;font-size:14px;letter-spacing:-0.5px">13</div>
<div style="position:absolute;left:0px;top:274px;width:25px;height:1px;background:#c4c4c4"></div>
<div class="hd" style="left:0.4px;width:25px;top:256.2px;height:20px;line-height:20px;font-size:14px;letter-spacing:-0.5px">14</div>
<div style="position:absolute;left:0px;top:291px;width:25px;height:1px;background:#c4c4c4"></div>
<div class="hd" style="left:0.4px;width:25px;top:273.2px;height:20px;line-height:20px;font-size:14px;letter-spacing:-0.5px">15</div>
<div style="position:absolute;left:0px;top:308px;width:25px;height:1px;background:#c4c4c4"></div>
<div class="hd" style="left:0.4px;width:25px;top:290.2px;height:20px;line-height:20px;font-size:14px;letter-spacing:-0.5px">16</div>
<div style="position:absolute;left:0px;top:325px;width:25px;height:1px;background:#c4c4c4"></div>
<div class="hd" style="left:0.4px;width:25px;top:307.2px;height:20px;line-height:20px;font-size:14px;letter-spacing:-0.5px">17</div>
<div style="position:absolute;left:0px;top:342px;width:25px;height:1px;background:#c4c4c4"></div>
<div class="hd" style="left:0.4px;width:25px;top:324.2px;height:20px;line-height:20px;font-size:14px;letter-spacing:-0.5px">18</div>
<div style="position:absolute;left:0px;top:359px;width:25px;height:1px;background:#c4c4c4"></div>
<div class="hd" style="left:0.4px;width:25px;top:341.2px;height:20px;line-height:20px;font-size:14px;letter-spacing:-0.5px">19</div>
<div style="position:absolute;left:0px;top:376px;width:25px;height:1px;background:#c4c4c4"></div>
<div class="hd" style="left:0.4px;width:25px;top:358.2px;height:20px;line-height:20px;font-size:14px;letter-spacing:-0.5px">20</div>
<div style="position:absolute;left:0px;top:393px;width:25px;height:1px;background:#c4c4c4"></div>
<div class="hd" style="left:0.4px;width:25px;top:375.2px;height:20px;line-height:20px;font-size:14px;letter-spacing:-0.5px">21</div>
<div style="position:absolute;left:0px;top:410px;width:25px;height:1px;background:#c4c4c4"></div>
<div class="hd" style="left:0.4px;width:25px;top:392.2px;height:20px;line-height:20px;font-size:14px;letter-spacing:-0.5px">22</div>
<div style="position:absolute;left:0px;top:427px;width:25px;height:1px;background:#c4c4c4"></div>
<div class="hd" style="left:0.4px;width:25px;top:409.2px;height:20px;line-height:20px;font-size:14px;letter-spacing:-0.5px">23</div>
<div style="position:absolute;left:0px;top:444px;width:25px;height:1px;background:#c4c4c4"></div>
<div class="hd" style="left:0.4px;width:25px;top:426.2px;height:20px;line-height:20px;font-size:14px;letter-spacing:-0.5px">24</div>
<div style="position:absolute;left:0px;top:461px;width:25px;height:1px;background:#c4c4c4"></div>
<div class="hd" style="left:0.4px;width:25px;top:443.2px;height:20px;line-height:20px;font-size:14px;letter-spacing:-0.5px">25</div>
<div style="position:absolute;left:0px;top:478px;width:25px;height:1px;background:#c4c4c4"></div>
<div class="hd" style="left:0.4px;width:25px;top:460.2px;height:20px;line-height:20px;font-size:14px;letter-spacing:-0.5px">26</div>
<div style="position:absolute;left:0px;top:495px;width:25px;height:1px;background:#c4c4c4"></div>
<div class="hd" style="left:0.4px;width:25px;top:477.2px;height:20px;line-height:20px;font-size:14px;letter-spacing:-0.5px">27</div>
<div style="position:absolute;left:0px;top:512px;width:25px;height:1px;background:#c4c4c4"></div>
<div class="hd" style="left:0.4px;width:25px;top:494.2px;height:20px;line-height:20px;font-size:14px;letter-spacing:-0.5px">28</div>
<div style="position:absolute;left:0px;top:529px;width:25px;height:1px;background:#c4c4c4"></div>
<div class="hd" style="left:0.4px;width:25px;top:511.2px;height:20px;line-height:20px;font-size:14px;letter-spacing:-0.5px">29</div>
<div style="position:absolute;left:0px;top:546px;width:25px;height:1px;background:#c4c4c4"></div>
<div class="hd" style="left:0.4px;width:25px;top:528.2px;height:20px;line-height:20px;font-size:14px;letter-spacing:-0.5px">30</div>
<div style="position:absolute;left:0px;top:563px;width:25px;height:1px;background:#c4c4c4"></div>
<div class="hd" style="left:0.4px;width:25px;top:545.2px;height:20px;line-height:20px;font-size:14px;letter-spacing:-0.5px">31</div>
<div style="position:absolute;left:0px;top:580px;width:25px;height:1px;background:#c4c4c4"></div>
<div class="hd" style="left:0.4px;width:25px;top:562.2px;height:20px;line-height:20px;font-size:14px;letter-spacing:-0.5px">32</div>
<div style="position:absolute;left:0px;top:597px;width:25px;height:1px;background:#c4c4c4"></div>
<div class="hd" style="left:0.4px;width:25px;top:579.2px;height:20px;line-height:20px;font-size:14px;letter-spacing:-0.5px">33</div>
<div style="position:absolute;left:0px;top:614px;width:25px;height:1px;background:#c4c4c4"></div>
<div class="hd" style="left:0.4px;width:25px;top:596.2px;height:20px;line-height:20px;font-size:14px;letter-spacing:-0.5px">34</div>
<div style="position:absolute;left:0px;top:631px;width:25px;height:1px;background:#c4c4c4"></div>
<div class="hd" style="left:0.4px;width:25px;top:613.2px;height:20px;line-height:20px;font-size:14px;letter-spacing:-0.5px">35</div>
<div style="position:absolute;left:0px;top:648px;width:25px;height:1px;background:#c4c4c4"></div>
<div class="hd" style="left:0.4px;width:25px;top:630.2px;height:20px;line-height:20px;font-size:14px;letter-spacing:-0.5px">36</div>
<div style="position:absolute;left:0px;top:665px;width:25px;height:1px;background:#c4c4c4"></div>
<div class="hd" style="left:0.4px;width:25px;top:647.2px;height:20px;line-height:20px;font-size:14px;letter-spacing:-0.5px">37</div>
<div style="position:absolute;left:0px;top:682px;width:25px;height:1px;background:#c4c4c4"></div>
<div class="hd" style="left:0.4px;width:25px;top:664.2px;height:20px;line-height:20px;font-size:14px;letter-spacing:-0.5px">38</div>
<div style="position:absolute;left:0px;top:699px;width:25px;height:1px;background:#c4c4c4"></div>
<div class="hd" style="left:0.4px;width:25px;top:681.2px;height:20px;line-height:20px;font-size:14px;letter-spacing:-0.5px">39</div>
<div style="position:absolute;left:0px;top:716px;width:25px;height:1px;background:#c4c4c4"></div>
<div class="hd" style="left:0.4px;width:25px;top:698.2px;height:20px;line-height:20px;font-size:14px;letter-spacing:-0.5px">40</div>
<div style="position:absolute;left:0px;top:733px;width:25px;height:1px;background:#c4c4c4"></div>
<div class="hd" style="left:0.4px;width:25px;top:715.2px;height:20px;line-height:20px;font-size:14px;letter-spacing:-0.5px">41</div>
<div style="position:absolute;left:0px;top:750px;width:25px;height:1px;background:#c4c4c4"></div>
<div class="hd" style="left:0.4px;width:25px;top:732.2px;height:20px;line-height:20px;font-size:14px;letter-spacing:-0.5px">42</div>
<div style="position:absolute;left:0px;top:767px;width:25px;height:1px;background:#c4c4c4"></div>
<div class="hd" style="left:0.4px;width:25px;top:749.2px;height:20px;line-height:20px;font-size:14px;letter-spacing:-0.5px">43</div>
<div style="position:absolute;left:0px;top:784px;width:25px;height:1px;background:#c4c4c4"></div>
<div class="hd" style="left:0.4px;width:25px;top:766.2px;height:20px;line-height:20px;font-size:14px;letter-spacing:-0.5px">44</div>
<div style="position:absolute;left:0px;top:801px;width:25px;height:1px;background:#c4c4c4"></div>
<div class="hd" style="left:0.4px;width:25px;top:783.2px;height:20px;line-height:20px;font-size:14px;letter-spacing:-0.5px">45</div>
<div style="position:absolute;left:0px;top:818px;width:25px;height:1px;background:#c4c4c4"></div>
<div class="hd" style="left:0.4px;width:25px;top:800.2px;height:20px;line-height:20px;font-size:14px;letter-spacing:-0.5px">46</div>
<div style="position:absolute;left:0px;top:835px;width:25px;height:1px;background:#c4c4c4"></div>
<div class="hd" style="left:0.4px;width:25px;top:817.2px;height:20px;line-height:20px;font-size:14px;letter-spacing:-0.5px">47</div>
<div style="position:absolute;left:0px;top:852px;width:25px;height:1px;background:#c4c4c4"></div>
<div class="hd" style="left:0.4px;width:25px;top:834.2px;height:20px;line-height:20px;font-size:14px;letter-spacing:-0.5px">48</div>
<div style="position:absolute;left:0px;top:869px;width:25px;height:1px;background:#c4c4c4"></div>
<div class="hd" style="left:0.4px;width:25px;top:851.2px;height:20px;line-height:20px;font-size:14px;letter-spacing:-0.5px">49</div>
<div style="position:absolute;left:0px;top:886px;width:25px;height:1px;background:#c4c4c4"></div>
<div class="hd" style="left:0.4px;width:25px;top:868.2px;height:20px;line-height:20px;font-size:14px;letter-spacing:-0.5px">50</div>
<div style="position:absolute;left:0px;top:903px;width:25px;height:1px;background:#c4c4c4"></div>
<div class="hd" style="left:0.4px;width:25px;top:885.2px;height:20px;line-height:20px;font-size:14px;letter-spacing:-0.5px">51</div>
<div style="position:absolute;left:1894px;top:22px;width:1px;height:884px;background:#a6a6a6"></div>
<div style="position:absolute;left:24px;top:21px;width:62px;height:34px;border:2px solid #217346;box-sizing:border-box"></div>
<div style="position:absolute;left:80px;top:50px;width:8px;height:7px;background:#fff"></div>
<div style="position:absolute;left:81px;top:51px;width:6px;height:5px;background:#217346"></div>
<div style="position:absolute;left:1895px;top:0px;width:26px;height:907px;background:#e6e6e6"></div>
<div style="position:absolute;left:1898px;top:8px;width:19px;height:19px;background:#fff;border:1px solid #9e9e9e;box-sizing:border-box"></div>
<svg style="position:absolute;left:1898px;top:8px" width="19" height="19"><polygon points="4.5,12 14.5,12 9.5,6.5" fill="#222"/></svg>
<div style="position:absolute;left:1898px;top:27px;width:19px;height:844px;background:#fff;border:1px solid #9e9e9e;box-sizing:border-box"></div>
<div style="position:absolute;left:1898px;top:871px;width:19px;height:17px;background:#f0f0f0"></div>
<div style="position:absolute;left:1898px;top:888px;width:19px;height:19px;background:#fff;border:1px solid #9e9e9e;box-sizing:border-box"></div>
<svg style="position:absolute;left:1898px;top:888px" width="19" height="19"><polygon points="4.5,7.7 13.5,7.7 9,12.5" fill="#222"/></svg>
<div style="position:absolute;left:1920px;top:0px;width:1px;height:966px;background:#111"></div>
<div style="position:absolute;left:0px;top:906px;width:1895px;height:1px;background:#bdbdbd"></div>
<div style="position:absolute;left:0px;top:907px;width:1920px;height:31px;background:#e6e6e6"></div>
<div style="position:absolute;left:0px;top:938px;width:1920px;height:1px;background:#d0d0d0"></div>
<svg style="position:absolute;left:25px;top:915px" width="50" height="16"><polygon points="5,7.5 10.5,3 10.5,12" fill="#1d6b38"/><polygon points="37,3 42.5,7.5 37,12" fill="#1d6b38"/></svg>
<div style="position:absolute;left:90.3px;top:923.8px;width:2.299999999999997px;height:2.300000000000068px;background:#1d6b38;border-radius:0.6px"></div>
<div style="position:absolute;left:95.3px;top:923.8px;width:2.299999999999997px;height:2.300000000000068px;background:#1d6b38;border-radius:0.6px"></div>
<div style="position:absolute;left:100.3px;top:923.8px;width:2.299999999999997px;height:2.300000000000068px;background:#1d6b38;border-radius:0.6px"></div>
<div style="position:absolute;left:112px;top:910px;width:1px;height:24px;background:#a8a8a8"></div>
<div style="position:absolute;left:129px;top:910px;height:22px;line-height:22px;font-size:17px;letter-spacing:0.2px;color:#444;white-space:nowrap">Startup Summary</div>
<div style="position:absolute;left:279px;top:910px;width:1px;height:24px;background:#a8a8a8"></div>
<div style="position:absolute;left:296px;top:910px;height:22px;line-height:22px;font-size:17px;letter-spacing:0.09px;color:#444;white-space:nowrap">Depreciation and Loan Schedule</div>
<div style="position:absolute;left:566px;top:910px;width:1px;height:24px;background:#a8a8a8"></div>
<div style="position:absolute;left:583px;top:910px;height:22px;line-height:22px;font-size:17px;letter-spacing:0.35px;color:#444;white-space:nowrap">Monthly Income Statement</div>
<div style="position:absolute;left:814px;top:910px;width:1px;height:24px;background:#a8a8a8"></div>
<div style="position:absolute;left:828px;top:910px;height:22px;line-height:22px;font-size:17px;letter-spacing:-0.18px;color:#444;white-space:nowrap">Yearly PnL</div>
<div style="position:absolute;left:921px;top:910px;width:1px;height:24px;background:#a8a8a8"></div>
<div style="position:absolute;left:938px;top:910px;height:22px;line-height:22px;font-size:17px;letter-spacing:0.1px;color:#444;white-space:nowrap">Cashflow Statement</div>
<div style="position:absolute;left:1107px;top:910px;width:1px;height:24px;background:#a8a8a8"></div>
<div style="position:absolute;left:1121px;top:910px;height:22px;line-height:22px;font-size:17px;letter-spacing:-0.17px;color:#444;white-space:nowrap">Balance Sheet</div>
<div style="position:absolute;left:1247px;top:906px;width:169px;height:30px;background:#fff;border:1px solid #bdbdbd;border-bottom:none;box-sizing:border-box"></div>
<div style="position:absolute;left:1247px;top:933px;width:169px;height:2px;background:#217346"></div>
<div style="position:absolute;left:1259px;top:909px;height:22px;line-height:22px;font-size:16.5px;font-weight:700;color:#217346;white-space:nowrap">Project Evaluation</div>
<div style="position:absolute;left:1431px;top:910px;width:128px;overflow:hidden;height:22px;line-height:22px;font-size:17px;color:#444;white-space:nowrap">Break Even Analysis</div>
<div style="position:absolute;left:1566.5px;top:924px;width:2.0px;height:2px;background:#1d6b38;border-radius:0.5px"></div>
<div style="position:absolute;left:1572.0px;top:924px;width:2.0px;height:2px;background:#1d6b38;border-radius:0.5px"></div>
<div style="position:absolute;left:1577.5px;top:924px;width:2.0px;height:2px;background:#1d6b38;border-radius:0.5px"></div>
<svg style="position:absolute;left:1594px;top:912px" width="22" height="22"><circle cx="10.5" cy="10.5" r="9.2" fill="none" stroke="#777" stroke-width="1.2"/><path d="M10.5 5.8v9.4M5.8 10.5h9.4" stroke="#666" stroke-width="1.6"/></svg>
<div style="position:absolute;left:1635px;top:917.0px;width:2.5px;height:2.5px;background:#a0a0a0"></div>
<div style="position:absolute;left:1635px;top:921.5px;width:2.5px;height:2.5px;background:#a0a0a0"></div>
<div style="position:absolute;left:1635px;top:926.0px;width:2.5px;height:2.5px;background:#a0a0a0"></div>
<div style="position:absolute;left:1655px;top:913px;width:19px;height:19px;background:#fff;border:1px solid #9e9e9e;box-sizing:border-box"></div>
<svg style="position:absolute;left:1655px;top:913px" width="19" height="19"><polygon points="6.5,9.5 12,4.5 12,14.5" fill="#222"/></svg>
<div style="position:absolute;left:1673px;top:913px;width:187px;height:19px;background:#fff;border:1px solid #9e9e9e;box-sizing:border-box"></div>
<div style="position:absolute;left:1860px;top:913px;width:16px;height:19px;background:#f0f0f0"></div>
<div style="position:absolute;left:1876px;top:913px;width:19px;height:19px;background:#fff;border:1px solid #9e9e9e;box-sizing:border-box"></div>
<svg style="position:absolute;left:1876px;top:913px" width="19" height="19"><polygon points="7,4.5 12.5,9.5 7,14.5" fill="#222"/></svg>
<div style="position:absolute;left:0px;top:939px;width:1920px;height:26px;background:#f3f3f3"></div>
<div style="position:absolute;left:0px;top:965px;width:1921px;height:1px;background:#6a6a6a"></div>
<div style="position:absolute;left:14px;top:943px;height:20px;line-height:20px;font-size:12px;color:#333">Ready</div>
<svg style="position:absolute;left:70px;top:938px" width="70" height="28"><circle cx="10.4" cy="9.3" r="3.6" fill="#555"/><rect x="14.9" y="7.1" width="7" height="3.5" fill="#555"/><path d="M8.7 13v7.3h12.7v-9.7" fill="none" stroke="#555" stroke-width="1.2"/><path d="M13.4 12.6h1.9M16.4 12.6h1.9M10.7 15.5h2.1M13.8 15.5h2M16.8 15.5h2.1M10.7 18.5h2.1M13.8 18.5h2M16.8 18.5h2.1" stroke="#555" stroke-width="1.1"/><path d="M52.4 7.6A6.6 6.6 0 0 0 53 21.2" fill="none" stroke="#555" stroke-width="1.2" stroke-dasharray="3.2 1.6"/><path d="M53.5 6V14.6M50.9 12.1L53.5 14.8L56.1 12.1M56 12.4H62M59.6 9.9L62.1 12.4L59.6 14.9" fill="none" stroke="#555" stroke-width="1.1"/><path d="M55.6 15.4L64.9 23.7M64.9 15.4L55.6 23.7" stroke="#444" stroke-width="1.8"/></svg>
<div style="position:absolute;left:137px;top:943px;height:20px;line-height:20px;font-size:12.7px;font-weight:700;color:#222;white-space:nowrap">Accessibility: Investigate</div>
<svg style="position:absolute;left:1400px;top:938px" width="200" height="28"><rect x="9.2" y="5" width="18.7" height="12.7" rx="1.5" fill="#4a4a4a"/><rect x="13" y="21.5" width="5" height="1.3" fill="#4a4a4a"/><circle cx="22.4" cy="18.2" r="6.2" fill="#f3f3f3"/><g transform="translate(22.4 18.2)" fill="#4a4a4a"><circle r="4.2"/><rect x="-1.2" y="-5.6" width="2.4" height="11.2"/><rect x="-5.6" y="-1.2" width="11.2" height="2.4"/><rect x="-1.2" y="-5.6" width="2.4" height="11.2" transform="rotate(45)"/><rect x="-1.2" y="-5.6" width="2.4" height="11.2" transform="rotate(-45)"/></g><circle cx="22.4" cy="18.2" r="1.8" fill="#f3f3f3"/></svg>
<div style="position:absolute;left:1430px;top:943px;height:20px;line-height:20px;font-size:12.7px;color:#222;white-space:nowrap">Display Settings</div>
<div style="position:absolute;left:1547px;top:939px;width:50px;height:26px;background:#c6c6c6"></div>
<svg style="position:absolute;left:1560px;top:940px" width="24" height="24"><path d="M4.9 4.75h15v15h-15zM4.9 9.75h15M4.9 14.75h15M9.9 4.75v15M14.9 4.75v15" fill="none" stroke="#666" stroke-width="1.1"/></svg>
<svg style="position:absolute;left:1600px;top:938px" width="90" height="28"><rect x="13.6" y="6.6" width="15.8" height="13.6" fill="none" stroke="#666" stroke-width="1.1"/><rect x="17.7" y="8.8" width="7.6" height="9.4" fill="none" stroke="#666" stroke-width="1.1"/><path d="M19.3 11.4h4.4M19.3 13.4h4.4M19.3 15.4h4.4" stroke="#666" stroke-width="0.9"/><rect x="63.7" y="6.6" width="15.6" height="14.6" fill="none" stroke="#666" stroke-width="1.1"/><path d="M68.6 6.6v8.6M73.6 6.6v8.6M63.7 15.2h9.9" fill="none" stroke="#666" stroke-width="1.1"/></svg>
<div style="position:absolute;left:1704px;top:951px;width:9px;height:1px;background:#444"></div>
<div style="position:absolute;left:1720px;top:951px;width:124px;height:1px;background:#555"></div>
<div style="position:absolute;left:1767px;top:945px;width:5px;height:14px;background:#444"></div>
<div style="position:absolute;left:1781px;top:948px;width:1px;height:7px;background:#444"></div>
<div style="position:absolute;left:1850px;top:951px;width:10px;height:1px;background:#444"></div>
<div style="position:absolute;left:1854.5px;top:946px;width:1.0px;height:11px;background:#444"></div>
<div style="position:absolute;left:1877px;top:943px;height:20px;line-height:20px;font-size:12px;color:#333;white-space:nowrap">80%</div>
</body></html>
